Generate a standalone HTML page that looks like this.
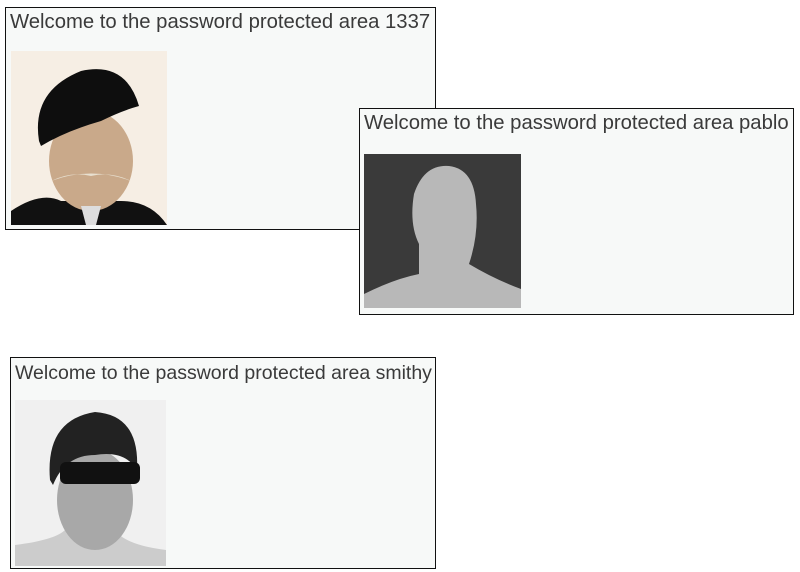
<!DOCTYPE html>
<html><head><style>
body{margin:0;width:800px;height:572px;background:#fff;position:relative;overflow:hidden;font-family:"Liberation Sans",Arial,sans-serif}
.b{position:absolute;border:1px solid #111;background:#f7f9f8;box-sizing:border-box}
.t{position:absolute;left:4px;top:3px;font-size:20.3px;color:#3a3a3a;white-space:nowrap}
.i{position:absolute;overflow:hidden}
</style></head><body>
<div class="b" style="left:5px;top:7px;width:431px;height:223px">
<div class="t">Welcome to the password protected area 1337</div>
<div class="i" style="left:5px;top:43px;width:156px;height:174px;background:#f6eee4">
<svg width="156" height="174">
<path d="M0 174 L0 160 Q30 140 50 150 L110 150 Q140 150 156 174Z" fill="#111"/>
<ellipse cx="80" cy="110" rx="42" ry="50" fill="#c9a98a"/>
<path d="M40 130 Q80 115 120 130 Q100 120 80 125 Q60 120 40 130Z" fill="#e8e0d0"/>
<path d="M28 90 Q20 40 70 20 Q115 10 128 55 Q110 60 90 70 Q55 80 30 95Z" fill="#0e0e0e"/>
<path d="M70 155 L90 155 L85 174 L75 174Z" fill="#ddd"/>
</svg></div>
</div>
<div class="b" style="left:359px;top:108px;width:435px;height:207px">
<div class="t">Welcome to the password protected area pablo</div>
<div class="i" style="left:4px;top:45px;width:157px;height:154px;background:#2a2a2a">
<svg width="157" height="154">
<rect width="157" height="154" fill="#3a3a3a"/>
<path d="M0 154 L0 140 Q30 125 55 120 L55 90 Q45 70 50 40 Q60 10 85 12 Q110 15 112 50 Q115 80 105 110 Q130 125 157 135 L157 154Z" fill="#b8b8b8"/>
</svg></div>
</div>
<div class="b" style="left:10px;top:357px;width:426px;height:212px">
<div class="t" style="font-size:19.5px;top:4px">Welcome to the password protected area smithy</div>
<div class="i" style="left:4px;top:42px;width:151px;height:166px;background:#f0f0f0">
<svg width="151" height="166">
<path d="M0 166 L0 145 Q40 140 50 130 L100 130 Q110 145 151 150 L151 166Z" fill="#ccc"/>
<ellipse cx="80" cy="100" rx="38" ry="50" fill="#a8a8a8"/>
<path d="M35 80 Q30 20 80 12 Q125 15 122 70 Q110 50 80 55 Q50 55 38 85Z" fill="#222"/>
<rect x="45" y="62" width="80" height="22" rx="6" fill="#111"/>
</svg></div>
</div>
</body></html>
